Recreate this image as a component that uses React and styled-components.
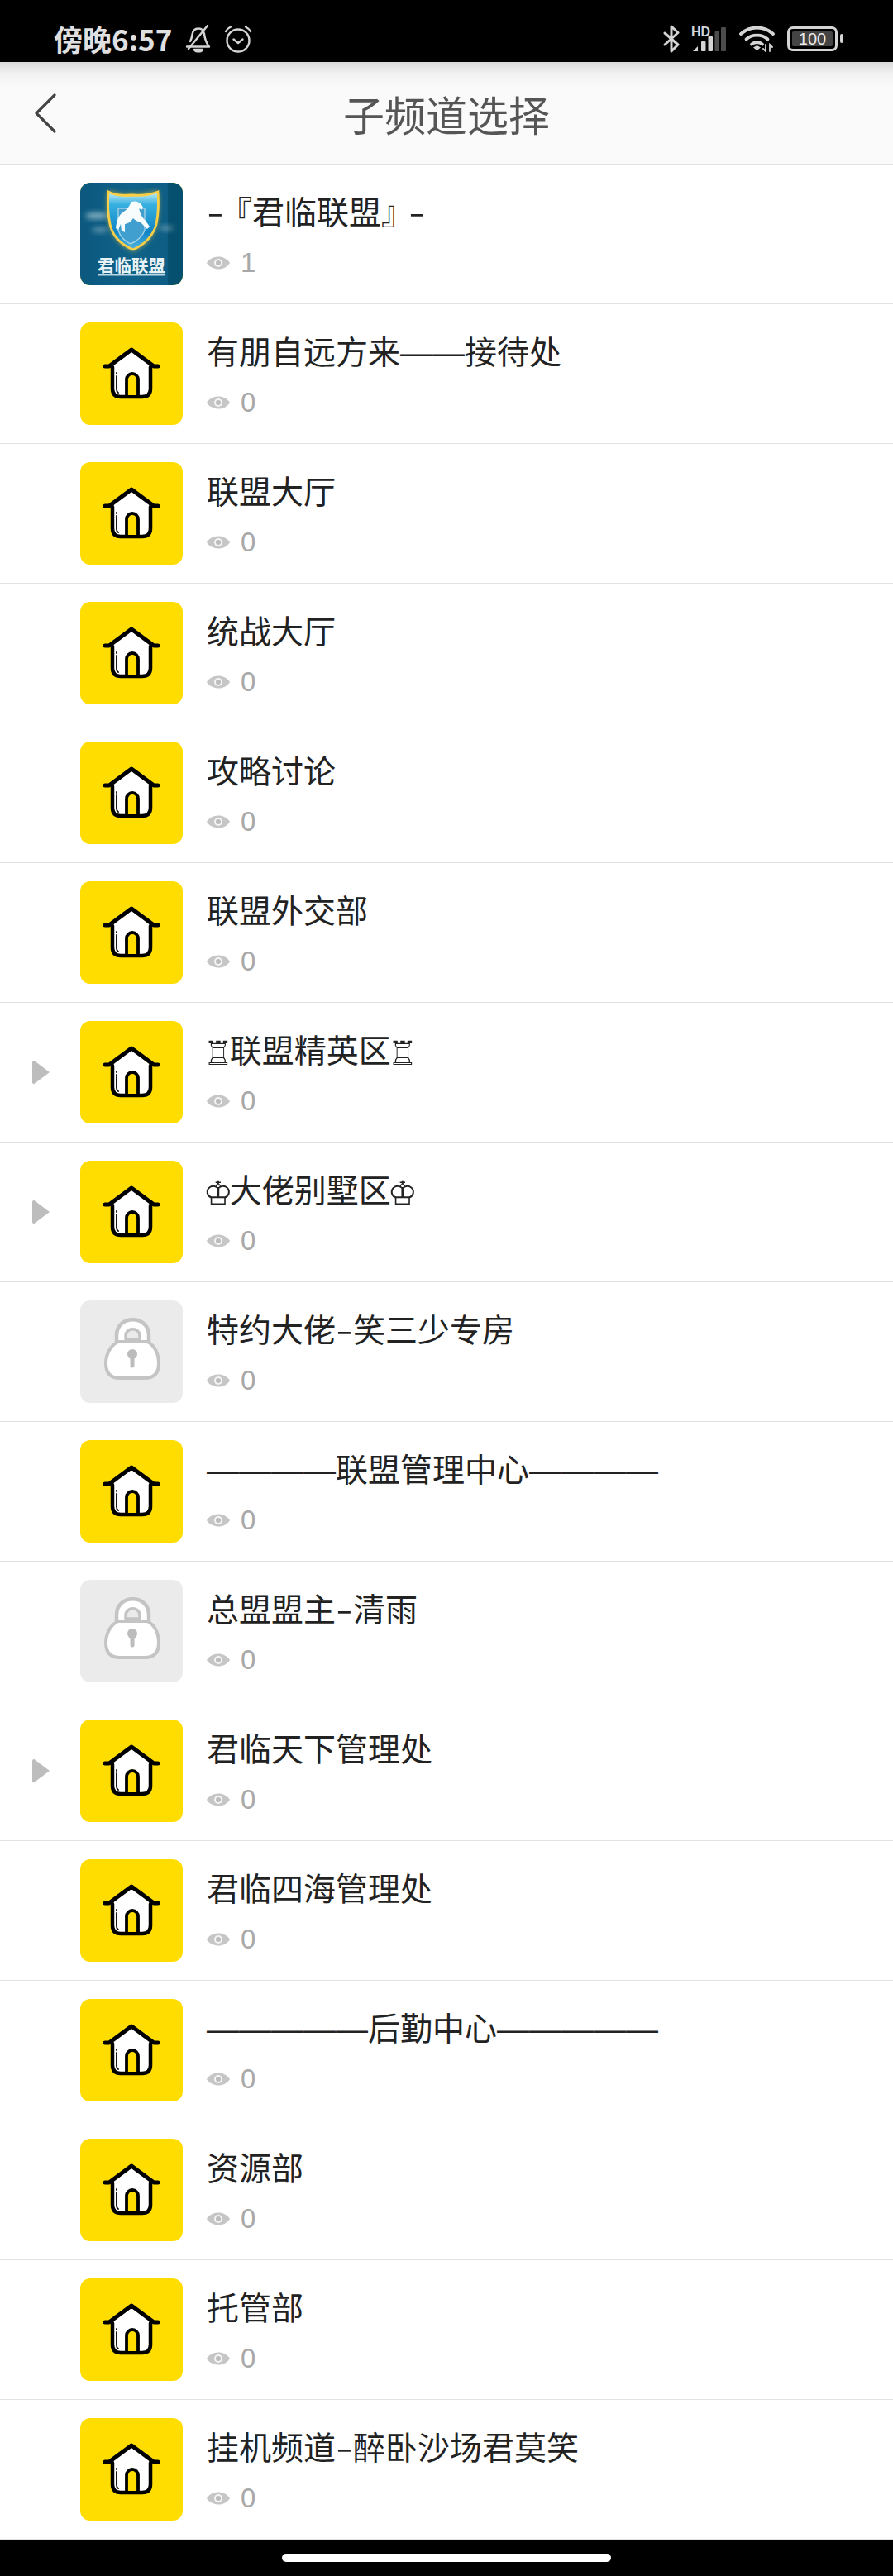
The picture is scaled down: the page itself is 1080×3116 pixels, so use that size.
import React from "react";
import styled, { createGlobalStyle } from "styled-components";

const GlobalStyle = createGlobalStyle`
  html, body {
    margin: 0;
    padding: 0;
    background: #fff;
  }
  * {
    box-sizing: border-box;
  }
`;

const channels = [
  { name: "-『君临联盟』-", count: 1, kind: "logo" },
  { name: "有朋自远方来——接待处", count: 0, kind: "home" },
  { name: "联盟大厅", count: 0, kind: "home" },
  { name: "统战大厅", count: 0, kind: "home" },
  { name: "攻略讨论", count: 0, kind: "home" },
  { name: "联盟外交部", count: 0, kind: "home" },
  { name: "♖联盟精英区♖", count: 0, kind: "home", expandable: true },
  { name: "♔大佬别墅区♔", count: 0, kind: "home", expandable: true },
  { name: "特约大佬-笑三少专房", count: 0, kind: "lock" },
  { name: "————联盟管理中心————", count: 0, kind: "home" },
  { name: "总盟盟主-清雨", count: 0, kind: "lock" },
  { name: "君临天下管理处", count: 0, kind: "home", expandable: true },
  { name: "君临四海管理处", count: 0, kind: "home" },
  { name: "—————后勤中心—————", count: 0, kind: "home" },
  { name: "资源部", count: 0, kind: "home" },
  { name: "托管部", count: 0, kind: "home" },
  { name: "挂机频道-醉卧沙场君莫笑", count: 0, kind: "home" },
];

// dashes, hyphens and chess pieces come out of another font in the app
function renderName(name) {
  return name.split(/(—+|-|[♖♔]|[『』])/).map((part, i) => {
    if (part.startsWith("—")) return <Dashes key={i}>{part}</Dashes>;
    if (part === "-") return <Hyphen key={i}>{part}</Hyphen>;
    if (part === "♖" || part === "♔") return <Chess key={i}>{part}</Chess>;
    if (part === "『") return <OpenCorner key={i}>{part}</OpenCorner>;
    if (part === "』") return <CloseCorner key={i}>{part}</CloseCorner>;
    return part;
  });
}

function BellOffIcon() {
  return (
    <svg width="32" height="34" viewBox="0 0 32 34" fill="none" stroke="#d4d4d4" strokeWidth="2.400" strokeLinecap="round" strokeLinejoin="round">
      <path d="M6 20c1.500-3 2-5 2.500-8C9 7 12 4.500 16 4.500c4 0 6.500 2.500 7 6.500.5 4 1.500 10 6 15.500H2" />
      <path d="M27 1 4 29" />
      <path d="M11 30h10c-1 3-9 3-10 0z" fill="#d4d4d4" />
    </svg>
  );
}

function AlarmIcon() {
  return (
    <svg width="34" height="34" viewBox="0 0 34 34" fill="none" stroke="#d4d4d4" strokeWidth="2.400" strokeLinecap="round" strokeLinejoin="round">
      <circle cx="17" cy="19" r="13.500" />
      <path d="M11.500 17.500l5.500 4.500 5.500-4.500" />
      <path d="M2 8c1-2 3-4 6-5.500M32 8c-1-2-3-4-6-5.500" />
    </svg>
  );
}

function BluetoothIcon() {
  return (
    <svg width="22" height="34" viewBox="0 0 22 34" fill="none" stroke="#d4d4d4" strokeWidth="3" strokeLinejoin="round" strokeLinecap="round">
      <path d="M4 10l16 14-8 8V2l8 7.500L4 24" />
    </svg>
  );
}

function SignalIcon() {
  return (
    <svg width="44" height="32" viewBox="0 0 44 32">
      <text x="0" y="12.500" fontFamily="'Liberation Sans', sans-serif" fontWeight="700" fontSize="16" fill="#d4d4d4">HD</text>
      <path d="M2 31l6-6v6z" fill="#d4d4d4" />
      <rect x="12" y="19" width="5.500" height="12" rx="1" fill="#d4d4d4" />
      <rect x="20.500" y="13" width="5.500" height="18" rx="1" fill="#d4d4d4" />
      <rect x="28.500" y="7" width="5.500" height="24" rx="1" fill="#4c4c4c" />
      <rect x="36" y="2" width="6" height="29" rx="1" fill="#4c4c4c" />
    </svg>
  );
}

function WifiIcon() {
  return (
    <svg width="44" height="34" viewBox="0 0 44 34" fill="none" stroke="#d4d4d4" strokeWidth="3.800" strokeLinecap="round">
      <path d="M2 11c11-10 28-10 39 0" />
      <path d="M8.500 17.500c7-6.500 19-6.500 26 0" />
      <path d="M15 23.500c4-3 9-3 13 0" />
      <path d="M17 27.500l4.500-2.500 4.500 2.500-4.500 3.500z" fill="#d4d4d4" stroke="none" />
      <path d="M32 24v8l-3-3M37 32v-8l3 3" strokeWidth="1.800" />
    </svg>
  );
}

function LogoIcon() {
  return (
    <svg width="124" height="124" viewBox="0 0 124 124">
      <defs>
        <linearGradient id="logoBack" x1="0" y1="0" x2="1" y2="0">
          <stop offset="0" stopColor="#0c587f" />
          <stop offset="0.5" stopColor="#0f6289" />
          <stop offset="0.85" stopColor="#0e5e85" />
          <stop offset="0.86" stopColor="#06506f" />
          <stop offset="1" stopColor="#06506f" />
        </linearGradient>
        <linearGradient id="logoShield" x1="0" y1="0" x2="0" y2="1">
          <stop offset="0" stopColor="#c8f0f6" />
          <stop offset="0.22" stopColor="#37b0e0" />
          <stop offset="0.7" stopColor="#0f84c6" />
          <stop offset="1" stopColor="#55b8dd" />
        </linearGradient>
        <filter id="soft" x="-30%" y="-30%" width="160%" height="160%">
          <feGaussianBlur stdDeviation="0.500" />
        </filter>
        <filter id="glow" x="-60%" y="-60%" width="220%" height="220%">
          <feGaussianBlur stdDeviation="3" />
        </filter>
      </defs>
      <rect width="124" height="124" fill="url(#logoBack)" />
      <ellipse cx="20" cy="40" rx="14" ry="4" fill="#d2e6ea" opacity="0.6" filter="url(#glow)" />
      <ellipse cx="24" cy="57" rx="10" ry="3" fill="#d2e6ea" opacity="0.45" filter="url(#glow)" />
      <ellipse cx="104" cy="55" rx="9" ry="3" fill="#d2e6ea" opacity="0.4" filter="url(#glow)" />
      <path d="M34 10c10 5 20 5 28 4 9 1 21 0 32-4 1 16 0 30-2 40-4 15-15 26-28 32-14-6-25-17-28-32-2-10-3-24-2-40z" fill="#ffd23e" opacity="0.8" filter="url(#glow)" />
      <path d="M34 11c10 5 20 5 28 4 9 1 21 0 32-4 1 16 0 30-2 39-4 15-15 25-28 31-14-6-25-16-28-31-2-9-3-23-2-39z" fill="url(#logoShield)" stroke="#fbcf45" strokeWidth="2.800" filter="url(#soft)" />
      <g filter="url(#soft)">
        <path d="M46 31h32v27c-4 9-10 13-17 16-7-3-12-8-15-16z" fill="#3f9fce" stroke="#a4d2e6" strokeWidth="1.400" />
        <path d="M62 23c6-2 12 1 14 7l-2 3-3-3c1 6 3 11 8 16l5 7-3 3-8-8c-4-1-7-3-9-5-3 5-8 7-10 7v10l-4-2-1-8-3 7-3-2c1-8 3-14 7-18 5-3 8-6 12-14z" fill="#f7fcfd" />
      </g>
      <Logotype x="62" y="108">君临联盟</Logotype>
      <rect x="21" y="111" width="82" height="1.500" fill="#b9d8e4" />
    </svg>
  );
}

function HouseIcon() {
  return (
    <svg width="124" height="124" viewBox="0 0 124 124" fill="none" stroke="#000" strokeLinecap="round" strokeLinejoin="round">
      <path d="M39 52 62 34l23 18v28q0 10-10 10H49q-10 0-10-10z" fill="#fff" stroke="none" />
      <path d="M30 53h5l27-20 27 20h5" strokeWidth="5" />
      <path d="M39 54v26q0 10 10 10h26q10 0 10-10V54" strokeWidth="4.500" />
      <path d="M56 90V69a7 7 0 0 1 14 0v21z" fill="#ffdd00" strokeWidth="3.800" />
      <path d="M44 61v1M44 65v16q0 3 2 4" strokeWidth="1.800" />
    </svg>
  );
}

function LockIcon() {
  return (
    <svg width="124" height="124" viewBox="0 0 124 124" strokeLinecap="round" strokeLinejoin="round">
      <path d="M44 53V42c0-25 39-25 39 0v11" fill="#fff" stroke="#c4c4c4" strokeWidth="4.500" />
      <path d="M55 47v-4c0-11 17-11 17 0v4z" fill="#ebebeb" stroke="#c4c4c4" strokeWidth="3.500" />
      <path d="M46 50h35c9 4 14 15 14 26 0 12-6 18-17 18H48c-11 0-17-6-17-18 0-11 6-22 15-26z" fill="#fff" stroke="#c4c4c4" strokeWidth="4" />
      <circle cx="63" cy="65" r="6" fill="#bcbcbc" />
      <path d="M63 66v13" stroke="#bcbcbc" strokeWidth="5" fill="none" />
    </svg>
  );
}

function EyeIcon() {
  return (
    <svg width="28" height="16" viewBox="0 0 28 16">
      <path d="M0 8C6-2 22-2 28 8 22 18 6 18 0 8z" fill="#c6c6c6" />
      <circle cx="14" cy="8" r="5" fill="#f4f4f4" />
      <circle cx="14" cy="8" r="3" fill="#bcbcbc" />
    </svg>
  );
}

const channelIcons = {
  logo: <LogoIcon />,
  home: <HouseIcon />,
  lock: <LockIcon />,
};

export default function App() {
  return (
    <Page>
      <GlobalStyle />
      <StatusBar>
        <StatusLeft>
          <Clock>傍晚6:57</Clock>
          <BellOffIcon />
          <AlarmIcon />
        </StatusLeft>
        <StatusRight>
          <BluetoothIcon />
          <SignalIcon />
          <WifiIcon />
          <Battery>
            <BatteryShell>
              <BatteryLevel>100</BatteryLevel>
            </BatteryShell>
            <BatteryNub />
          </Battery>
        </StatusRight>
      </StatusBar>

      <Header>
        <BackButton>
          <svg width="28" height="48" viewBox="0 0 28 48" fill="none" stroke="#444" strokeWidth="3.200" strokeLinecap="round" strokeLinejoin="round">
            <path d="M25 2 3 24l22 22" />
          </svg>
        </BackButton>
        <Title>子频道选择</Title>
      </Header>

      <List>
        {channels.map((channel, index) => (
          <Row key={index}>
            <ArrowSlot>{channel.expandable && <Arrow />}</ArrowSlot>
            <Tile $kind={channel.kind}>{channelIcons[channel.kind]}</Tile>
            <Info>
              <Name>{renderName(channel.name)}</Name>
              <Viewers>
                <EyeIcon />
                <Count>{channel.count}</Count>
              </Viewers>
            </Info>
          </Row>
        ))}
      </List>

      <NavBar>
        <HomeBar />
      </NavBar>
    </Page>
  );
}

// Styled Components
const Page = styled.div`
  width: 1080px;
  height: 3116px;
  display: flex;
  flex-direction: column;
  overflow: hidden;
  background: #fff;
  font-family: "Noto Sans CJK SC", "DejaVu Sans", sans-serif;
`;

const StatusBar = styled.div`
  height: 75px;
  flex: none;
  display: flex;
  align-items: center;
  justify-content: space-between;
  padding: 18px 60px 0 65px;
  background: #000;
`;

const StatusLeft = styled.div`
  display: flex;
  align-items: center;
  gap: 15px;
`;

const Clock = styled.span`
  width: 144px;
  font-size: 35px;
  font-weight: 700;
  line-height: 44px;
  color: #e0e0e0;
  white-space: nowrap;
`;

const StatusRight = styled.div`
  display: flex;
  align-items: center;
  gap: 14px;
`;

const Battery = styled.div`
  display: flex;
  align-items: center;
  gap: 3px;
`;

const BatteryShell = styled.div`
  width: 61px;
  height: 30px;
  padding: 3px;
  border: 3px solid #d4d4d4;
  border-radius: 7px;
  display: flex;
`;

const BatteryLevel = styled.div`
  flex: 1;
  min-width: 0;
  background: #444;
  border-radius: 2px;
  color: #eaeaea;
  font-family: "Liberation Sans", sans-serif;
  font-size: 20px;
  line-height: 18px;
  text-align: center;
`;

const BatteryNub = styled.div`
  width: 4px;
  height: 11px;
  border-radius: 2px;
  background: #d4d4d4;
`;

const Header = styled.header`
  height: 124px;
  flex: none;
  display: grid;
  grid-template-columns: 1fr auto 1fr;
  align-items: center;
  padding: 0 41px;
  background: linear-gradient(#d9d9d9 0, #f1f1f1 14px, #fafafa 30px, #fafafa 100%);
  border-bottom: 1px solid #e2e2e2;
`;

const BackButton = styled.div`
  display: flex;
  align-items: center;
`;

const Title = styled.h1`
  margin: 0;
  font-size: 50px;
  font-weight: 400;
  line-height: 70px;
  color: #555;
  white-space: nowrap;
`;

const List = styled.div`
  flex: 1;
  display: flex;
  flex-direction: column;
`;

const Row = styled.div`
  height: 169px;
  flex: none;
  display: flex;
  align-items: flex-start;
  padding: 22px 0 0 39px;
  border-bottom: 1px solid #e2e2e2;
`;

const ArrowSlot = styled.div`
  width: 58px;
  height: 124px;
  flex: none;
  display: flex;
  align-items: center;
`;

const Arrow = styled.span`
  display: block;
  width: 21px;
  height: 29px;
  background: #bdbdbd;
  clip-path: polygon(8% 0, 100% 50%, 8% 100%, 0 94%, 0 6%);
`;

const Tile = styled.div`
  width: 124px;
  height: 124px;
  flex: none;
  overflow: hidden;
  border-radius: 12px;
  background: ${(props) => (props.$kind === "lock" ? "#ebebeb" : "#ffdd00")};

  svg {
    display: block;
  }
`;

const Logotype = styled.text`
  font-family: "Noto Sans CJK SC", sans-serif;
  font-size: 20.500px;
  font-weight: 700;
  fill: #e6f2f5;
  text-anchor: middle;
`;

const Info = styled.div`
  margin-left: 29px;
  padding-top: 5px;
  display: flex;
  flex-direction: column;
`;

const Name = styled.div`
  height: 56px;
  font-size: 39px;
  line-height: 56px;
  color: #222;
  white-space: nowrap;
`;

const Dashes = styled.span`
  font-family: "Liberation Sans", sans-serif;
  line-height: 0;
`;

const Hyphen = styled.span`
  display: inline-block;
  width: 21px;
  line-height: 0;
  text-align: center;
  transform: scaleX(1.500);
`;

const OpenCorner = styled.span`
  margin-left: -5px;
`;

const CloseCorner = styled.span`
  margin-right: -6px;
`;

const Chess = styled.span`
  display: inline-block;
  font-family: "DejaVu Sans", sans-serif;
  font-size: 31px;
  line-height: 0;
  transform: scale(1.300);
`;

const Viewers = styled.div`
  margin-top: 16px;
  height: 40px;
  display: flex;
  align-items: center;
  gap: 13px;
`;

const Count = styled.span`
  font-family: "Liberation Sans", sans-serif;
  font-size: 33px;
  line-height: 40px;
  color: #a8a8a8;
`;

const NavBar = styled.div`
  height: 44px;
  flex: none;
  display: flex;
  align-items: center;
  justify-content: center;
  background: #000;
`;

const HomeBar = styled.div`
  width: 398px;
  height: 10px;
  border-radius: 5px;
  background: #fff;
`;
